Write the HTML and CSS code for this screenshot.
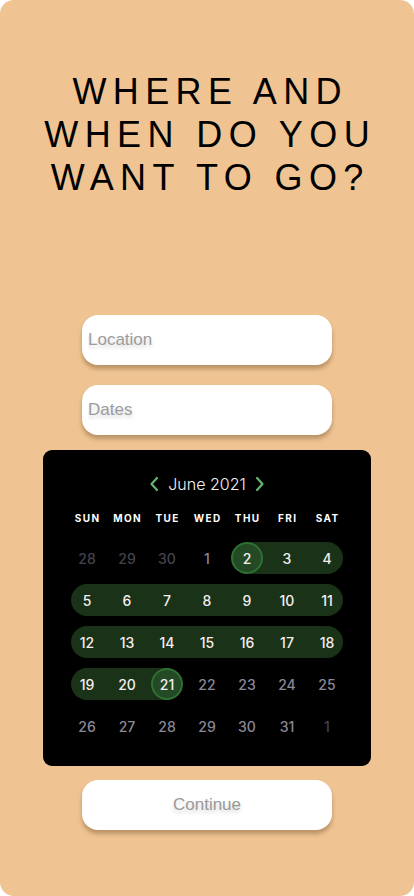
FILE: index.html
```html
<!DOCTYPE html>
<html lang="en">
<head>
<meta charset="utf-8">
<title>Where and when</title>
<link rel="stylesheet" href="styles.css">
</head>
<body>
<main class="screen">
  <h1 class="title">WHERE AND<br>WHEN DO YOU<br>WANT TO GO?</h1>
  <div class="form">
    <input class="field" type="text" placeholder="Location">
    <input class="field field-dates" type="text" placeholder="Dates">
    <section class="calendar">
      <div class="cal-head">
        <svg class="chev" width="10" height="16" viewBox="0 0 10 16"><path d="M8 2 L2.5 8 L8 14" fill="none" stroke="#66b56c" stroke-width="2.2" stroke-linecap="round" stroke-linejoin="round"/></svg>
        <span class="month">June 2021</span>
        <svg class="chev" width="10" height="16" viewBox="0 0 10 16"><path d="M2 2 L7.5 8 L2 14" fill="none" stroke="#66b56c" stroke-width="2.2" stroke-linecap="round" stroke-linejoin="round"/></svg>
      </div>
      <div class="weekdays">
        <span>SUN</span><span>MON</span><span>TUE</span><span>WED</span><span>THU</span><span>FRI</span><span>SAT</span>
      </div>
      <div class="days">
        <span class="d other">28</span><span class="d other">29</span><span class="d other">30</span><span class="d">1</span><span class="d sel start">2</span><span class="d in">3</span><span class="d in end">4</span>
        <span class="d in start">5</span><span class="d in">6</span><span class="d in">7</span><span class="d in">8</span><span class="d in">9</span><span class="d in">10</span><span class="d in end">11</span>
        <span class="d in start">12</span><span class="d in">13</span><span class="d in">14</span><span class="d in">15</span><span class="d in">16</span><span class="d in">17</span><span class="d in end">18</span>
        <span class="d in start">19</span><span class="d in">20</span><span class="d sel end">21</span><span class="d">22</span><span class="d">23</span><span class="d">24</span><span class="d">25</span>
        <span class="d">26</span><span class="d">27</span><span class="d">28</span><span class="d">29</span><span class="d">30</span><span class="d">31</span><span class="d other">1</span>
      </div>
    </section>
    <button class="continue" type="button">Continue</button>
  </div>
</main>
</body>
</html>
```
FILE: styles.css
```css
html, body {
  margin: 0;
  padding: 0;
  background: #ffffff;
}

.screen {
  width: 414px;
  min-height: 896px;
  background: #efc492;
  border-radius: 14px;
  box-sizing: border-box;
  padding-top: 70px;
  font-family: "Liberation Sans", Arial, sans-serif;
}

.title {
  margin: 0;
  text-align: center;
  font-family: "Liberation Sans", Arial, sans-serif;
  font-weight: 400;
  font-size: 36px;
  line-height: 43px;
  letter-spacing: 6.4px;
  padding-left: 6.4px;
  color: #000;
}

.form {
  margin-top: 116px;
  display: flex;
  flex-direction: column;
  align-items: center;
}

.field {
  width: 250px;
  height: 50px;
  box-sizing: border-box;
  border: none;
  border-radius: 16px;
  background: #fff;
  padding: 0 6px;
  font-family: "Liberation Sans", Arial, sans-serif;
  font-size: 17px;
  color: #333;
  box-shadow: 0 4px 4px rgba(90, 55, 20, 0.35);
  outline: none;
}

.field::placeholder {
  color: #9c9c9c;
  text-shadow: 0 3px 4px rgba(0, 0, 0, 0.18);
}

.field-dates {
  margin-top: 20px;
}

.calendar {
  margin-top: 15px;
  width: 328px;
  box-sizing: border-box;
  background: #000;
  border-radius: 9px;
  padding: 20px 24px 19px;
  font-family: Inter, "Open Sans", sans-serif;
}

.cal-head {
  height: 28px;
  display: flex;
  align-items: center;
  justify-content: center;
  gap: 9px;
}

.month {
  color: #f2f2f2;
  font-size: 16px;
  font-weight: 300;
}

.chev {
  display: block;
}

.weekdays {
  margin-top: 14px;
  display: grid;
  grid-template-columns: repeat(7, 40px);
  height: 12px;
  line-height: 12px;
}

.weekdays span {
  text-align: center;
  color: #fff;
  font-size: 10px;
  font-weight: 700;
  letter-spacing: 1.4px;
  padding-left: 1.4px;
}

.days {
  margin-top: 13px;
  display: grid;
  grid-template-columns: repeat(7, 40px);
  grid-auto-rows: 42px;
}

.d {
  position: relative;
  display: flex;
  align-items: center;
  justify-content: center;
  font-size: 14px;
  font-weight: 500;
  color: #8a8896;
  z-index: 0;
}

.d.other {
  color: #45434e;
}

.d.in,
.d.sel {
  color: #f6eeee;
}

.d.in::before,
.d.sel::before {
  content: "";
  position: absolute;
  left: 0;
  right: 0;
  top: 5px;
  bottom: 5px;
  background: #1a3218;
  z-index: -2;
}

.d.start::before {
  left: 4px;
  border-radius: 16px 0 0 16px;
}

.d.end::before {
  right: 4px;
  border-radius: 0 16px 16px 0;
}

.d.sel.start::before {
  left: 20px;
  border-radius: 0;
}

.d.sel.end::before {
  right: 20px;
  border-radius: 0;
}

.d.sel::after {
  content: "";
  position: absolute;
  left: 4px;
  top: 5px;
  width: 32px;
  height: 32px;
  box-sizing: border-box;
  border-radius: 50%;
  background: #234a24;
  border: 2px solid #2f7033;
  z-index: -1;
}

.continue {
  margin-top: 14px;
  width: 250px;
  height: 50px;
  border: none;
  border-radius: 16px;
  background: #fff;
  font-family: "Liberation Sans", Arial, sans-serif;
  font-size: 17px;
  color: #999;
  text-shadow: 0 3px 4px rgba(0, 0, 0, 0.18);
  box-shadow: 0 4px 4px rgba(90, 55, 20, 0.35);
  cursor: pointer;
}
```
